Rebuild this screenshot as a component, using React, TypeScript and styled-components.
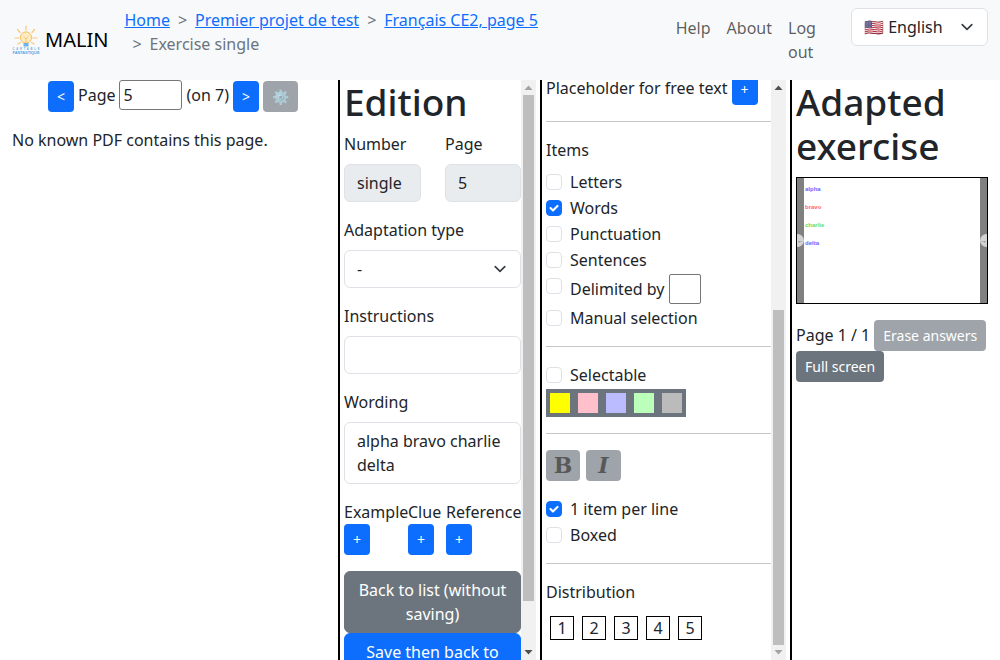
import React, { useLayoutEffect, useRef } from "react";
import styled, { createGlobalStyle } from "styled-components";

const Global = createGlobalStyle`
  * { box-sizing: border-box; }
  html, body { margin: 0; padding: 0; height: 100%; overflow: hidden; }
  body {
    font-family: "Noto Sans", sans-serif;
    font-size: 16px;
    line-height: 1.5;
    color: #212529;
    background: #fff;
  }
`;

const Page = styled.div`
  display: flex;
  flex-direction: column;
  height: 660px;
  width: 1000px;
  overflow: hidden;
`;

const NavBar = styled.nav`
  flex: 0 0 80px;
  display: flex;
  align-items: center;
  background: #f8f9fa;
  padding: 8px 12px;
`;

const Brand = styled.div`
  display: flex;
  align-items: center;
  gap: 5px;
  font-size: 20px;
  color: #000;
  margin-right: 16px;
`;

const Crumbs = styled.ol`
  flex: 1;
  display: flex;
  flex-wrap: wrap;
  list-style: none;
  margin: 0 0 16px;
  padding: 0;
  align-self: flex-start;
  width: 0;
`;

const Crumb = styled.li`
  color: #6c757d;
  padding-left: 8px;
  &:first-child { padding-left: 0; }
  &:not(:first-child)::before {
    content: ">";
    padding-right: 8px;
    color: #6c757d;
  }
`;

const CrumbLink = styled.a`
  color: #0d6efd;
  text-decoration: underline;
`;

const NavLinks = styled.ul`
  display: flex;
  list-style: none;
  margin: 0;
  padding: 0;
`;

const NavLink = styled.li<{ $w?: number }>`
  padding: 8px;
  color: rgba(0, 0, 0, 0.65);
  width: ${(p) => (p.$w ? `${p.$w}px` : "auto")};
`;

const LangSelect = styled.div`
  width: 137px;
  height: 38px;
  align-self: flex-start;
  margin-left: 16px;
  display: flex;
  align-items: center;
  justify-content: space-between;
  padding: 0 12px;
  background: #fff;
  border: 1px solid #dee2e6;
  border-radius: 6px;
`;

const Columns = styled.div`
  flex: 1;
  min-height: 0;
  display: grid;
  grid-template-columns: 340px 202px 250px 208px;
`;

const PdfColumn = styled.section`
  border-right: 2px solid #000;
  padding: 0 12px;
`;

const Pager = styled.div`
  display: flex;
  justify-content: center;
  align-items: flex-start;
  height: 32px;
  margin-left: 8px;
`;

const SmallButton = styled.button<{ $tone?: "primary" | "secondary"; $off?: boolean }>`
  font-family: inherit;
  font-size: 14px;
  line-height: 21px;
  padding: 4px 8px;
  height: 31px;
  border: 1px solid transparent;
  border-radius: 4px;
  color: #fff;
  background: ${(p) => (p.$tone === "secondary" ? "#6c757d" : "#0d6efd")};
  opacity: ${(p) => (p.$off ? 0.65 : 1)};
  white-space: nowrap;
`;

const PagerArrow = styled(SmallButton)`
  margin-top: 1px;
`;

const PagerText = styled.span<{ $l?: number; $r?: number }>`
  margin: 3px ${(p) => p.$r ?? 4}px 0 ${(p) => p.$l ?? 4}px;
`;

const PageInput = styled.input`
  width: 63px;
  height: 30px;
  font: inherit;
  color: #212529;
  padding: 1px 3px 1px 4px;
  border: 1px solid #767676;
  border-radius: 3px;
  background: #fff;
`;

const GearButton = styled(SmallButton)`
  margin: 1px 0 0 4px;
  padding: 4px 8px;
  width: 35px;
`;

const Notice = styled.p`
  margin: 16px 0 0;
`;

const ScrollColumn = styled.section`
  display: flex;
  border-right: 2px solid #000;
  min-height: 0;
  min-width: 0;
  padding-right: 4px;
`;

const Scroller = styled.div`
  flex: 1;
  min-width: 0;
  height: 100%;
  overflow: hidden;
  padding: 0 0 0 4px;
`;

const ScrollTrack = styled.div`
  flex: 0 0 15px;
  display: flex;
  flex-direction: column;
  background: #f1f1f1;
`;

const ScrollArrow = styled.svg`
  display: block;
  flex: 0 0 15px;
  width: 15px;
  height: 15px;
`;

const ThumbLane = styled.div<{ $before: number }>`
  flex: 1;
  padding: ${(p) => p.$before}px 2px 0;
`;

const Thumb = styled.div<{ $size: number }>`
  height: ${(p) => p.$size}px;
  background: #bebebe;
`;

const Title = styled.h1`
  font-size: 37px;
  font-weight: 500;
  line-height: 1.2;
  margin: 0 0 8px;
`;

const TwoFields = styled.div`
  display: grid;
  grid-template-columns: 77px 76px;
  column-gap: 24px;
`;

const FieldLabel = styled.label`
  display: block;
  margin-bottom: 8px;
`;

const Field = styled.div`
  margin-bottom: 16px;
`;

const ReadOnly = styled.div`
  height: 38px;
  padding: 6px 12px;
  background: #e9ecef;
  border: 1px solid #dee2e6;
  border-radius: 6px;
`;

const SelectBox = styled.div`
  height: 38px;
  padding: 6px 12px;
  background: #fff;
  border: 1px solid #dee2e6;
  border-radius: 6px;
  display: flex;
  align-items: center;
  justify-content: space-between;
`;

const TextBox = styled.div<{ $h?: number }>`
  min-height: ${(p) => p.$h ?? 38}px;
  padding: 6px 12px;
  background: #fff;
  border: 1px solid #dee2e6;
  border-radius: 6px;
`;

const TriColumns = styled.div`
  display: grid;
  grid-template-columns: 64px 38px 1fr;
  margin-bottom: 16px;
`;

const TriCell = styled.div`
  display: flex;
  flex-direction: column;
  align-items: flex-start;
  white-space: nowrap;
  line-height: 24px;
`;

const WideButton = styled.button<{ $tone: "primary" | "secondary" }>`
  display: block;
  width: 177px;
  font: inherit;
  color: #fff;
  padding: 6px 12px;
  text-align: center;
  border: 1px solid ${(p) => (p.$tone === "primary" ? "#0d6efd" : "#6c757d")};
  border-radius: 6px;
  background: ${(p) => (p.$tone === "primary" ? "#0d6efd" : "#6c757d")};
`;

const HiddenAbove = styled.div`
  height: 366px;
`;

const PlaceholderRow = styled.div`
  height: 31px;
  display: flex;
  gap: 4px;
  align-items: flex-start;
  line-height: 24px;
  padding-top: 2px;
  & > button { margin-top: -2px; }
`;

const Rule = styled.hr`
  border: 0;
  border-top: 1px solid #c6c7c8;
  margin: 16px 0;
`;

const SectionLabel = styled.div`
  margin-bottom: 8px;
`;

const CheckRow = styled.label`
  display: flex;
  align-items: flex-start;
  min-height: 24px;
  margin-bottom: 2px;
  padding-left: 24px;
  position: relative;
`;

const Box = styled.span<{ $on?: boolean }>`
  position: absolute;
  left: 0;
  top: 4px;
  width: 16px;
  height: 16px;
  border: 1px solid ${(p) => (p.$on ? "#0d6efd" : "#dee2e6")};
  border-radius: 4px;
  background: ${(p) => (p.$on ? "#0d6efd" : "#fff")};
  display: flex;
  align-items: center;
  justify-content: center;
`;

const DelimRow = styled(CheckRow)`
  height: 30px;
  padding-top: 3px;
`;

const DelimInput = styled.span`
  display: inline-block;
  width: 32px;
  height: 30px;
  border: 1px solid #767676;
  border-radius: 2px;
  margin: -3px 0 0 4px;
`;

const Swatches = styled.div`
  display: flex;
  gap: 8px;
  width: 140px;
  height: 28px;
  padding: 4px;
  background: #6c757d;
`;

const Swatch = styled.span<{ $c: string }>`
  width: 20px;
  height: 20px;
  background: ${(p) => p.$c};
`;

const StyleButtons = styled.div`
  display: flex;
  gap: 6px;
  margin-bottom: 16px;
`;

const StyleButton = styled.button<{ $italic?: boolean }>`
  width: ${(p) => (p.$italic ? 35 : 34)}px;
  height: 31px;
  padding: 0;
  border: 0;
  border-radius: 4px;
  background: #6c757d;
  opacity: 0.65;
  color: #000;
  font: ${(p) => (p.$italic ? "italic" : "normal")} 700 22px/31px "DejaVu Serif", serif;
`;

const DistRow = styled.div`
  display: flex;
  gap: 8px;
  padding: 0 4px 20px;
  margin-top: 12px;
`;

const DistBox = styled.span`
  width: 24px;
  height: 24px;
  border: 1px solid #000;
  display: flex;
  align-items: center;
  justify-content: center;
`;

const PreviewColumn = styled.section`
  padding: 0 12px 0 4px;
`;

const Preview = styled.div`
  width: 192px;
  height: 127px;
  border: 1px solid #000;
  display: grid;
  grid-template-columns: 7px 1fr 7px;
  margin-bottom: 16px;
  background: #fff;
`;

const Gutter = styled.div`
  background: #808080;
  position: relative;
`;

const GutterKnob = styled.span<{ $side: "left" | "right" }>`
  position: absolute;
  top: 56px;
  ${(p) => p.$side}: 0;
  width: 7px;
  height: 13px;
  background: #d3d3d3;
  border-radius: ${(p) => (p.$side === "left" ? "0 7px 7px 0" : "7px 0 0 7px")};
  color: #666;
  font: 700 7px/13px "Liberation Sans", sans-serif;
  text-align: center;
  overflow: hidden;
`;

const PreviewList = styled.div`
  padding: 8px 1px;
  display: flex;
  flex-direction: column;
  gap: 12px;
`;

const PreviewWord = styled.span<{ $c: string }>`
  font: 700 6px/6px "Liberation Sans", sans-serif;
  color: ${(p) => p.$c};
`;

const PreviewControls = styled.div`
  display: flex;
  flex-wrap: wrap;
  align-items: center;
  width: 192px;
`;

const PageLabel = styled.span`
  margin-right: 4px;
`;

const Logo = () => (
  <svg width="28" height="30" viewBox="0 0 28 30" aria-hidden="true">
    <g stroke="#fbc877" strokeWidth="1.2" strokeLinecap="round">
      <line x1="14" y1="1" x2="14" y2="5" />
      <line x1="5.5" y1="4.5" x2="8" y2="7.5" />
      <line x1="22.5" y1="4.5" x2="20" y2="7.5" />
      <line x1="3" y1="13" x2="7" y2="13" />
      <line x1="25" y1="13" x2="21" y2="13" />
      <line x1="6" y1="19" x2="8.5" y2="17.5" />
      <line x1="22" y1="19" x2="19.5" y2="17.5" />
    </g>
    <circle cx="14" cy="12.5" r="5.6" fill="#fdebc2" stroke="#f8bb5e" strokeWidth="1" />
    <path d="M11.5 11.5 14 14l2.5-2.5M14 14v4" fill="none" stroke="#f8bb5e" strokeWidth=".8" />
    <rect x="11.5" y="18" width="5" height="3.5" fill="#6fb1e8" />
    <text x="14" y="25.2" textAnchor="middle" fontSize="2.7" fontWeight="700" textLength="27" fill="#6ea9e0" fontFamily="Liberation Sans">CARTABLE</text>
    <text x="14" y="28.8" textAnchor="middle" fontSize="3" fontWeight="700" textLength="27" lengthAdjust="spacingAndGlyphs" fill="#5d9fe0" fontFamily="Liberation Sans">FANTASTIQUE</text>
  </svg>
);

const Chevron = () => (
  <svg width="16" height="16" viewBox="0 0 16 16" aria-hidden="true">
    <path fill="none" stroke="#343a40" strokeLinecap="round" strokeLinejoin="round" strokeWidth="2" d="m2 5 6 6 6-6" transform="translate(1.6 1.6) scale(.8)" />
  </svg>
);

const Tick = () => (
  <svg width="14" height="14" viewBox="0 0 20 20" aria-hidden="true">
    <path fill="none" stroke="#fff" strokeLinecap="round" strokeLinejoin="round" strokeWidth="3" d="m5 10 3.5 3.5L15 7" />
  </svg>
);

const Check = ({ on, label }: { on?: boolean; label: string }) => (
  <CheckRow>
    <Box $on={on}>{on && <Tick />}</Box>
    {label}
  </CheckRow>
);

const FakeScrollbar = ({ before, size, atTop }: { before: number; size: number; atTop: boolean }) => (
  <ScrollTrack aria-hidden="true">
    <ScrollArrow viewBox="0 0 15 15">
      <path d="M3.5 10 7.5 5.5l4 4.5z" fill={atTop ? "#a3a3a3" : "#505050"} />
    </ScrollArrow>
    <ThumbLane $before={before}>
      <Thumb $size={size} />
    </ThumbLane>
    <ScrollArrow viewBox="0 0 15 15">
      <path d="M3.5 5 7.5 9.5l4-4.5z" fill={atTop ? "#505050" : "#a3a3a3"} />
    </ScrollArrow>
  </ScrollTrack>
);

const swatches = ["#ffff00", "#ffc0cb", "#bbbbff", "#bbffbb", "#bbbbbb"];
const words: [string, string][] = [
  ["alpha", "#6666ff"],
  ["bravo", "#ff6666"],
  ["charlie", "#66dd66"],
  ["delta", "#6666ff"],
];

export default function App() {
  const adapt = useRef<HTMLDivElement>(null);
  useLayoutEffect(() => {
    if (adapt.current) adapt.current.scrollTop = 372;
  }, []);

  return (
    <Page>
      <Global />
      <NavBar>
        <Brand>
          <Logo />
          MALIN
        </Brand>
        <Crumbs>
          <Crumb><CrumbLink>Home</CrumbLink></Crumb>
          <Crumb><CrumbLink>Premier projet de test</CrumbLink></Crumb>
          <Crumb><CrumbLink>Français CE2, page 5</CrumbLink></Crumb>
          <Crumb>Exercise single</Crumb>
        </Crumbs>
        <NavLinks>
          <NavLink>Help</NavLink>
          <NavLink>About</NavLink>
          <NavLink $w={55}>Log out</NavLink>
        </NavLinks>
        <LangSelect>
          <span>🇺🇸 English</span>
          <Chevron />
        </LangSelect>
      </NavBar>
      <Columns>
        <PdfColumn>
          <Pager>
            <PagerArrow>&lt;</PagerArrow>
            <PagerText $r={3}>Page</PagerText>
            <PageInput defaultValue="5" />
            <PagerText $l={5}>(on 7)</PagerText>
            <PagerArrow>&gt;</PagerArrow>
            <GearButton $tone="secondary" $off>⚙️</GearButton>
          </Pager>
          <Notice>No known PDF contains this page.</Notice>
        </PdfColumn>

        <ScrollColumn>
          <Scroller>
            <Title>Edition</Title>
            <TwoFields>
              <Field>
                <FieldLabel>Number</FieldLabel>
                <ReadOnly>single</ReadOnly>
              </Field>
              <Field>
                <FieldLabel>Page</FieldLabel>
                <ReadOnly>5</ReadOnly>
              </Field>
            </TwoFields>
            <Field>
              <FieldLabel>Adaptation type</FieldLabel>
              <SelectBox>- <Chevron /></SelectBox>
            </Field>
            <Field>
              <FieldLabel>Instructions</FieldLabel>
              <TextBox />
            </Field>
            <Field>
              <FieldLabel>Wording</FieldLabel>
              <TextBox $h={62}>alpha bravo charlie delta</TextBox>
            </Field>
            <TriColumns>
              <TriCell>Example<SmallButton>+</SmallButton></TriCell>
              <TriCell>Clue<SmallButton>+</SmallButton></TriCell>
              <TriCell>Reference<SmallButton>+</SmallButton></TriCell>
            </TriColumns>
            <WideButton $tone="secondary">Back to list (without saving)</WideButton>
            <WideButton $tone="primary">Save then back to list</WideButton>
          </Scroller>
          <FakeScrollbar before={0} size={506} atTop />
        </ScrollColumn>

        <ScrollColumn>
          <Scroller ref={adapt}>
            <HiddenAbove />
            <PlaceholderRow>
              Placeholder for free text
              <SmallButton>+</SmallButton>
            </PlaceholderRow>
            <Rule />
            <SectionLabel>Items</SectionLabel>
            <Check label="Letters" />
            <Check on label="Words" />
            <Check label="Punctuation" />
            <Check label="Sentences" />
            <DelimRow>
              <Box />
              Delimited by<DelimInput />
            </DelimRow>
            <Check label="Manual selection" />
            <Rule />
            <CheckRow>
              <Box />
              Selectable
            </CheckRow>
            <Swatches>
              {swatches.map((c) => <Swatch key={c} $c={c} />)}
            </Swatches>
            <Rule />
            <StyleButtons>
              <StyleButton>B</StyleButton>
              <StyleButton $italic>I</StyleButton>
            </StyleButtons>
            <Check on label="1 item per line" />
            <Check label="Boxed" />
            <Rule />
            <div>Distribution</div>
            <DistRow>
              {[1, 2, 3, 4, 5].map((n) => <DistBox key={n}>{n}</DistBox>)}
            </DistRow>
          </Scroller>
          <FakeScrollbar before={215} size={335} atTop={false} />
        </ScrollColumn>

        <PreviewColumn>
          <Title>Adapted exercise</Title>
          <Preview>
            <Gutter><GutterKnob $side="left">←</GutterKnob></Gutter>
            <PreviewList>
              {words.map(([w, c]) => <PreviewWord key={w} $c={c}>{w}</PreviewWord>)}
            </PreviewList>
            <Gutter><GutterKnob $side="right">→</GutterKnob></Gutter>
          </Preview>
          <PreviewControls>
            <PageLabel>Page 1 / 1</PageLabel>
            <SmallButton $tone="secondary" $off>Erase answers</SmallButton>
            <SmallButton $tone="secondary">Full screen</SmallButton>
          </PreviewControls>
        </PreviewColumn>
      </Columns>
    </Page>
  );
}
